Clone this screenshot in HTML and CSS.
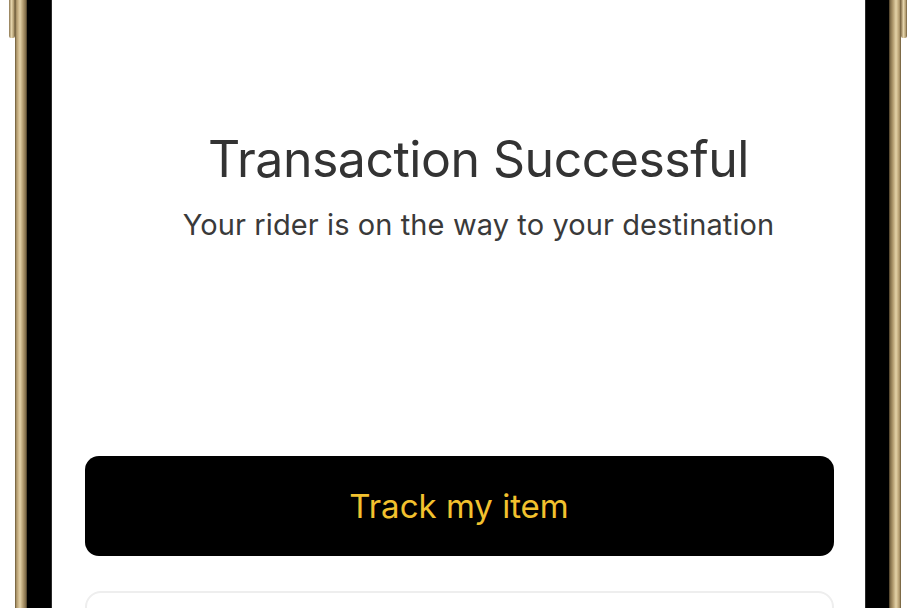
FILE: index.html
```html
<!DOCTYPE html>
<html>
<head>
<meta charset="utf-8">
<link rel="stylesheet" href="styles.css">
</head>
<body>
<div class="device">
  <div class="btn-side btn-left"></div>
  <div class="btn-side btn-right"></div>
  <div class="frame">
    <div class="bezel">
      <div class="screen">
        <div class="message">
          <h1 class="title">Transaction Successful</h1>
          <p class="subtitle">Your rider is on the way to your destination</p>
        </div>
        <div class="actions">
          <button class="primary">Track my item</button>
          <div class="secondary"></div>
        </div>
      </div>
    </div>
  </div>
</div>
</body>
</html>
```

FILE: styles.css
```css
html, body {
  margin: 0;
  padding: 0;
  background: #ffffff;
  width: 916px;
  height: 608px;
  overflow: hidden;
}
.device {
  position: relative;
  width: 916px;
  height: 608px;
  display: flex;
  justify-content: flex-start;
}
.frame {
  margin-left: 15px;
  width: 886px;
  height: 608px;
  box-sizing: border-box;
  padding: 0 12px;
  background: linear-gradient(90deg, #5a4a2c 0px, #a08a60 1px, #c9b285 3px, #e3d2a8 5px, #b39c70 8px, #7b6845 11px, #3a2f1d 12px, transparent 12px, transparent 874px, #3a2f1d 874px, #7b6845 875px, #b39c70 878px, #e3d2a8 881px, #c9b285 883px, #a08a60 885px, #5a4a2c 886px);
}
.bezel {
  height: 100%;
  background: #000;
  padding: 0 23px 0 24px;
  box-sizing: border-box;
}
.screen {
  height: 100%;
  background: #fff;
  display: flex;
  flex-direction: column;
  align-items: center;
  border-left: 1px solid #2a2a2a;
  border-right: 1px solid #2a2a2a;
  box-sizing: border-box;
}
.btn-side {
  position: absolute;
  top: 0;
  width: 6px;
  height: 38px;
  border-radius: 0 0 2px 2px;
  background: linear-gradient(90deg, #8a7550, #e6d6ad 40%, #b09a6e 80%, #6b5a3a);
}
.btn-left { left: 9px; }
.btn-right { left: 901px; }
.message {
  padding-left: 40px;
  margin-top: 126px;
  display: flex;
  flex-direction: column;
  align-items: center;
  font-family: "Inter", "Open Sans", sans-serif;
  color: #333333;
}
.title {
  margin: 0;
  font-weight: 400;
  font-size: 50px;
  line-height: 66px;
  letter-spacing: -0.5px;
}
.subtitle {
  margin: 15px 0 0;
  font-size: 29px;
  line-height: 35px;
  color: #3a3a3a;
  letter-spacing: 0.1px;
}
.actions {
  margin-top: auto;
  width: 749px;
  display: flex;
  flex-direction: column;
  gap: 35px;
  margin-left: 1px;
}
.primary {
  height: 100px;
  border: none;
  border-radius: 14px;
  background: #000;
  color: #f2c12e;
  font-family: "Inter", "Open Sans", sans-serif;
  font-size: 33px;
  padding: 0;
}
.secondary {
  height: 40px;
  margin-bottom: -27px;
  border: 2px solid #eeeeee;
  border-radius: 16px;
}
```
